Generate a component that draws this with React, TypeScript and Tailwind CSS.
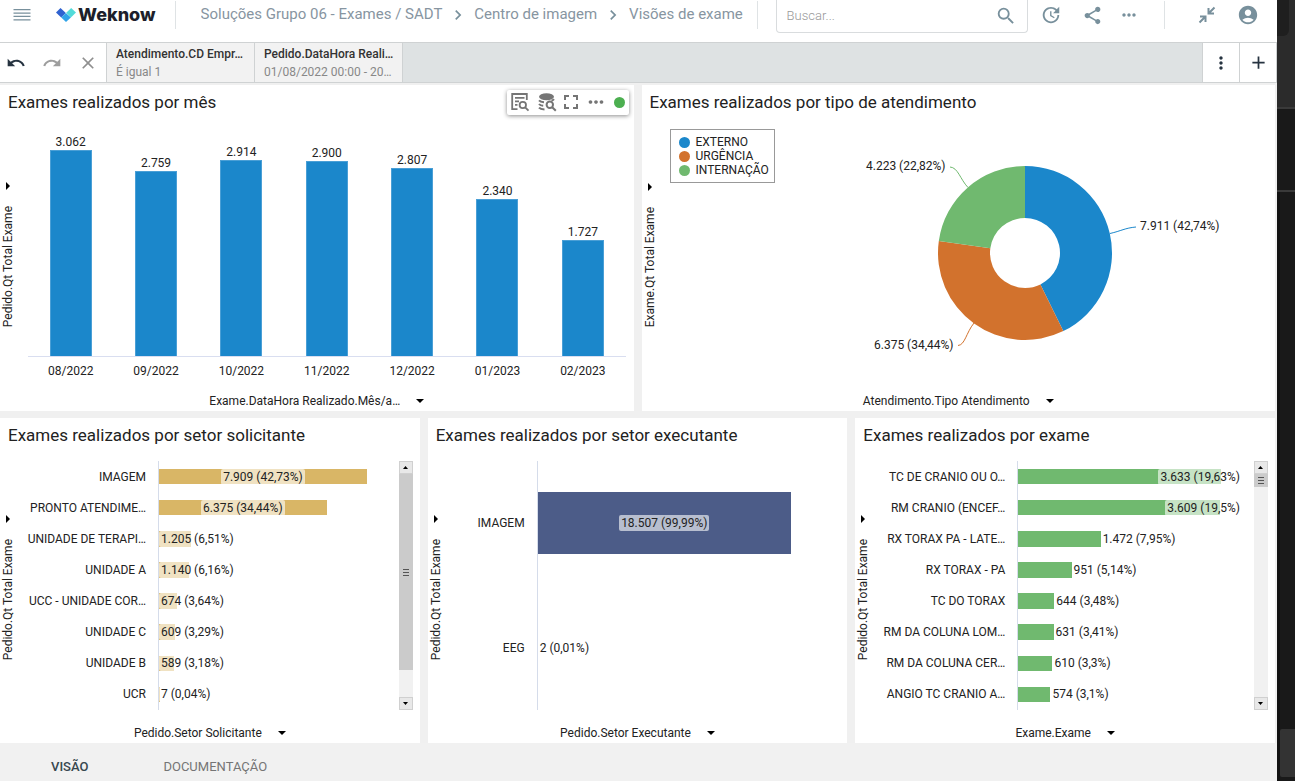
import type { ReactNode } from "react";
import clsx from "clsx";
import {
  MdAccountCircle,
  MdAdd,
  MdChevronRight,
  MdClose,
  MdMoreHoriz,
  MdMoreVert,
  MdRedo,
  MdSearch,
  MdShare,
  MdUndo,
  MdUpdate,
} from "react-icons/md";

type Bar = { label: string; value: number; text: string };

const MONTHS: Bar[] = [
  { label: "08/2022", value: 3062, text: "3.062" },
  { label: "09/2022", value: 2759, text: "2.759" },
  { label: "10/2022", value: 2914, text: "2.914" },
  { label: "11/2022", value: 2900, text: "2.900" },
  { label: "12/2022", value: 2807, text: "2.807" },
  { label: "01/2023", value: 2340, text: "2.340" },
  { label: "02/2023", value: 1727, text: "1.727" },
];

const REQUESTERS: Bar[] = [
  { label: "IMAGEM", value: 7909, text: "7.909 (42,73%)" },
  { label: "PRONTO ATENDIME…", value: 6375, text: "6.375 (34,44%)" },
  { label: "UNIDADE DE TERAPI…", value: 1205, text: "1.205 (6,51%)" },
  { label: "UNIDADE A", value: 1140, text: "1.140 (6,16%)" },
  { label: "UCC - UNIDADE COR…", value: 674, text: "674 (3,64%)" },
  { label: "UNIDADE C", value: 609, text: "609 (3,29%)" },
  { label: "UNIDADE B", value: 589, text: "589 (3,18%)" },
  { label: "UCR", value: 7, text: "7 (0,04%)" },
];

const EXECUTORS: Bar[] = [
  { label: "IMAGEM", value: 18507, text: "18.507 (99,99%)" },
  { label: "EEG", value: 2, text: "2 (0,01%)" },
];

const EXAMS: Bar[] = [
  { label: "TC DE CRANIO OU O…", value: 3633, text: "3.633 (19,63%)" },
  { label: "RM CRANIO (ENCEF…", value: 3609, text: "3.609 (19,5%)" },
  { label: "RX TORAX PA - LATE…", value: 1472, text: "1.472 (7,95%)" },
  { label: "RX TORAX - PA", value: 951, text: "951 (5,14%)" },
  { label: "TC DO TORAX", value: 644, text: "644 (3,48%)" },
  { label: "RM DA COLUNA LOM…", value: 631, text: "631 (3,41%)" },
  { label: "RM DA COLUNA CER…", value: 610, text: "610 (3,3%)" },
  { label: "ANGIO TC CRANIO A…", value: 574, text: "574 (3,1%)" },
];

const KINDS = [
  { label: "EXTERNO", value: 7911, color: "#1b87cb" },
  { label: "URGÊNCIA", value: 6375, color: "#d2722d" },
  { label: "INTERNAÇÃO", value: 4223, color: "#70b96f" },
];

function Logo() {
  return (
    <a href="#" className="flex items-center gap-0.5 text-[#1d1f2b]">
      <svg width="20" height="14" viewBox="0 0 20 14" aria-hidden="true">
        <path d="M0 4.5 4.5 0 9.8 5 5.2 9.5z" fill="#2f62d0" />
        <path d="M10.2 4.8 15.2 0 20 4.5 14.9 9.5z" fill="#52dbd9" />
        <path d="M5.2 9.5 9.9 4.9 14.9 9.5 10 14z" fill="#2fa3e8" />
      </svg>
      <span className="font-[Inter,sans-serif] text-lg leading-6 font-extrabold">Weknow</span>
    </a>
  );
}

function CollapseIcon() {
  return (
    <svg width="18" height="18" viewBox="0 0 18 18" fill="none" stroke="currentColor" strokeWidth="2" aria-hidden="true">
      <path d="M16.5 1.5 11 7M10.5 2v5.500h5.500M1.5 16.5 7 11M2 10.5h5.500v5.500" />
    </svg>
  );
}

function TableSearchIcon() {
  return (
    <svg width="20" height="20" viewBox="0 0 20 20" fill="none" stroke="currentColor" strokeWidth="1.8" aria-hidden="true">
      <path d="M7.5 17.2H2.2V2h14.6v6M5 5.8h9.5M5 9.3h4M5 12.8h2.5" />
      <circle cx="12.8" cy="13" r="3.2" />
      <path d="m15.2 15.4 3.3 3.3" />
    </svg>
  );
}

function DataSearchIcon() {
  return (
    <svg width="20" height="20" viewBox="0 0 20 20" fill="none" stroke="currentColor" strokeWidth="2" aria-hidden="true">
      <ellipse cx="9.5" cy="4.7" rx="7.5" ry="3.5" fill="currentColor" stroke="none" />
      <path d="M2 8.3c1 1.2 2.8 1.8 5 2M2 12c.8 1 2.2 1.6 4.2 1.8M2 15.6c1 1.2 3 1.8 5.5 1.9M17 7.2c-.6.8-1.5 1.200-2.500 1.500" />
      <circle cx="12.8" cy="12.8" r="3.2" />
      <path d="m15.2 15.2 3.6 3.6" />
    </svg>
  );
}

function FullscreenIcon() {
  return (
    <svg width="14" height="14" viewBox="0 0 14 14" fill="none" stroke="currentColor" strokeWidth="2" aria-hidden="true">
      <path d="M1 5V1h4M9 1h4v4M13 9v4H9M5 13H1V9" />
    </svg>
  );
}

function Divider() {
  return <div className="h-7 w-px shrink-0 bg-[#dfe3e5]" />;
}

function Header() {
  return (
    <header className="flex h-[42px] items-center bg-white pb-3 text-[#78909c]">
      <button aria-label="Menu" className="ml-[13px] shrink-0">
        <svg width="18" height="12" viewBox="0 0 18 12" fill="currentColor" aria-hidden="true">
          <path d="M.5 0h17v1.300H.5zM.5 3.400h17v1.300H.5zM.5 6.800h17v1.300H.5zM.5 10.200h17v1.300H.5z" />
        </svg>
      </button>
      <div className="mr-[19px] ml-[25px] shrink-0">
        <Logo />
      </div>
      <Divider />
      <nav className="ml-[25px] flex w-[544px] items-center overflow-hidden text-[15px] whitespace-nowrap text-[#8795a1]">
        <a href="#">Soluções Grupo 06 - Exames / SADT</a>
        <MdChevronRight className="mx-1.5 shrink-0 text-[#78909c]" size={20} />
        <a href="#">Centro de imagem</a>
        <MdChevronRight className="mx-1.5 shrink-0 text-[#78909c]" size={20} />
        <a href="#">Visões de exame</a>
      </nav>
      <div className="mr-[18px] ml-3">
        <Divider />
      </div>
      <label className="flex h-[33px] min-w-32 flex-1 items-center self-start rounded-b border border-t-0 border-[#d9dcde] pr-2.5 pl-2.5">
        <input
          type="text"
          aria-label="Buscar"
          placeholder="Buscar..."
          className="min-w-0 flex-1 text-[13px] font-light outline-none placeholder:text-[#999]"
        />
        <MdSearch size={22} />
      </label>
      <div className="flex shrink-0 items-center">
        <button aria-label="Atualizar" className="ml-3">
          <MdUpdate size={22} />
        </button>
        <button aria-label="Compartilhar" className="ml-5">
          <MdShare size={21} />
        </button>
        <button aria-label="Mais opções" className="mr-[25px] ml-4">
          <MdMoreHoriz size={20} />
        </button>
        <Divider />
        <button aria-label="Recolher" className="ml-[33px]">
          <CollapseIcon />
        </button>
        <button aria-label="Conta" className="mr-[18px] ml-[21px]">
          <MdAccountCircle size={22} />
        </button>
      </div>
    </header>
  );
}

function Filter({ name, value }: { name: string; value: string }) {
  return (
    <button className="w-[148px] border-l border-[#cfd2d3] bg-[#f2f2f2] pl-[9px] text-left text-xs leading-[18px] whitespace-nowrap">
      <div className="font-medium text-[#333]">{name}</div>
      <div className="text-[#888]">{value}</div>
    </button>
  );
}

function FilterBar() {
  return (
    <div className="flex h-[41px] border-y border-[#cfd2d3] bg-[#dee2e3] text-[#263340]">
      <div className="flex w-[106px] items-center justify-between bg-white px-1.5">
        <button aria-label="Desfazer">
          <MdUndo size={20} />
        </button>
        <button aria-label="Refazer" className="text-[#9e9e9e]">
          <MdRedo size={20} />
        </button>
        <button aria-label="Limpar" className="mr-0.5 text-[#8f8f8f]">
          <MdClose size={20} />
        </button>
      </div>
      <Filter name="Atendimento.CD Empr…" value="É igual 1" />
      <Filter name="Pedido.DataHora Reali…" value="01/08/2022 00:00 - 20…" />
      <div className="flex-1 border-l border-[#cfd2d3]" />
      <button aria-label="Opções do filtro" className="flex w-[37px] items-center justify-center border-l border-[#cfd2d3] bg-white">
        <MdMoreVert size={20} />
      </button>
      <button aria-label="Adicionar filtro" className="flex w-[38px] items-center justify-center border-x border-[#cfd2d3] bg-white">
        <MdAdd size={21} />
      </button>
    </div>
  );
}

function CardTools() {
  return (
    <div className="mr-[5px] flex h-[25px] items-center gap-[7px] rounded-xs bg-white pr-1 pl-[3px] text-[#757575] shadow-[0_1px_4px_rgba(0,0,0,0.45)]">
      <button aria-label="Detalhar">
        <TableSearchIcon />
      </button>
      <button aria-label="Dados">
        <DataSearchIcon />
      </button>
      <button aria-label="Tela cheia">
        <FullscreenIcon />
      </button>
      <button aria-label="Mais">
        <MdMoreHoriz size={22} />
      </button>
      <span className="size-[11px] rounded-full bg-[#4caf50]" />
    </div>
  );
}

function Card(props: { title: string; yLabel: string; xLabel: string; tools?: ReactNode; children: ReactNode }) {
  return (
    <section className="flex min-w-0 flex-col bg-white">
      <div className="flex h-9 items-center justify-between pb-0.5 pl-2">
        <h2 className="text-[17px] leading-6">{props.title}</h2>
        {props.tools}
      </div>
      <div className="flex flex-1">
        <button className="mr-3 flex w-4 flex-col items-center justify-center gap-4">
          <svg width="4" height="8" viewBox="0 0 4 8" aria-hidden="true">
            <path d="M0 0 4 4 0 8z" />
          </svg>
          <span className="rotate-180 leading-4 [writing-mode:vertical-rl]">{props.yLabel}</span>
        </button>
        {props.children}
      </div>
      <button className="flex h-[22px] items-center justify-center gap-4 pt-0.5">
        {props.xLabel}
        <svg width="8" height="4" viewBox="0 0 8 4" aria-hidden="true">
          <path d="M0 0h8L4 4z" />
        </svg>
      </button>
    </section>
  );
}

function ColumnChart({ data, max }: { data: Bar[]; max: number }) {
  return (
    <div className="flex flex-1 flex-col pr-2">
      <div className="flex flex-1 border-b border-[#d9def0]">
        {data.map((d) => (
          <div key={d.label} className="flex flex-1 flex-col items-center justify-end">
            <span className="leading-4">{d.text}</span>
            <div
              className="w-[42px] shrink-0 border border-b-0 border-[#4a9fd6] bg-[#1b87cb]"
              style={{ height: `${(d.value / max) * 100}%` }}
            />
          </div>
        ))}
      </div>
      <div className="flex h-8 pb-1">
        {data.map((d) => (
          <span key={d.label} className="flex-1 text-center leading-7">
            {d.label}
          </span>
        ))}
      </div>
    </div>
  );
}

function Scrollbar({ thumb }: { thumb: string }) {
  return (
    <div className="mr-[7px] flex w-3.5 shrink-0 flex-col bg-[#f1f1f1]">
      <div className="flex h-[13px] items-center justify-center border border-[#d0d0d0] bg-[#e8e8e8]">
        <svg width="5" height="3" viewBox="0 0 5 3" aria-hidden="true">
          <path d="M0 3h5L2.500 0z" />
        </svg>
      </div>
      <div className="flex-1">
        <div className="flex flex-col items-center justify-center gap-px bg-[#cbcbcb]" style={{ height: thumb }}>
          <div className="h-px w-1.5 bg-[#555]" />
          <div className="my-px h-px w-1.5 bg-[#555]" />
          <div className="h-px w-1.5 bg-[#555]" />
        </div>
      </div>
      <div className="flex h-[13px] items-center justify-center border border-[#d0d0d0] bg-[#e8e8e8]">
        <svg width="5" height="3" viewBox="0 0 5 3" aria-hidden="true">
          <path d="M0 0h5L2.500 3z" />
        </svg>
      </div>
    </div>
  );
}

type Place = "center" | "start" | "end" | "after";

function RowChart(props: {
  data: Bar[];
  max: number;
  labelClass: string;
  plotClass: string;
  barClass: string;
  place: (d: Bar) => Place;
  children?: ReactNode;
}) {
  return (
    <div className="flex min-w-0 flex-1 pt-[7px] pb-[11px]">
      <div className={clsx("flex shrink-0 flex-col text-right whitespace-nowrap", props.labelClass)}>
        {props.data.map((d) => (
          <span key={d.label} className="flex flex-1 items-center justify-end">
            {d.label}
          </span>
        ))}
      </div>
      <div className={clsx("ml-3 flex flex-1 flex-col border-l border-[#d5dcea]", props.plotClass)}>
        {props.data.map((d) => {
          const place = props.place(d);
          const width = `${(d.value / props.max) * 100}%`;
          const text = (
            <span className={clsx("px-0.5 leading-4 whitespace-nowrap", place !== "after" && "rounded-xs bg-white/60")}>
              {d.text}
            </span>
          );
          return (
            <div key={d.label} className="relative flex flex-1 items-center">
              <div className={clsx("flex h-1/2 shrink-0 items-center justify-center", props.barClass)} style={{ width }}>
                {place === "center" && text}
              </div>
              {place === "after" && text}
              {(place === "start" || place === "end") && (
                <div className={clsx("absolute inset-0 flex items-center", place === "end" && "justify-end")}>{text}</div>
              )}
            </div>
          );
        })}
      </div>
      {props.children}
    </div>
  );
}

function arc(from: number, to: number) {
  const [cx, cy, R, r] = [200, 132, 87, 35];
  const point = (t: number, radius: number) => {
    const a = t * 2 * Math.PI;
    return `${cx + radius * Math.sin(a)} ${cy - radius * Math.cos(a)}`;
  };
  const large = to - from > 0.5 ? 1 : 0;
  return `M${point(from, R)}A${R} ${R} 0 ${large} 1 ${point(to, R)}L${point(to, r)}A${r} ${r} 0 ${large} 0 ${point(from, r)}z`;
}

function DonutChart() {
  const total = KINDS.reduce((sum, k) => sum + k.value, 0);
  let start = 0;
  return (
    <div className="flex flex-1 items-start">
      <ul className="mt-2 border border-[#999] py-[5px] pr-[5px] pl-2">
        {KINDS.map((k) => (
          <li key={k.label} className="flex items-center gap-1.5 leading-[14px]">
            <span className="size-[11px] rounded-full" style={{ background: k.color }} />
            {k.label}
          </li>
        ))}
      </ul>
      <div className="flex flex-1 justify-center">
        <svg width="400" height="240" viewBox="0 0 400 240" className="text-xs" fill="#222">
          {KINDS.map((k) => {
            const from = start;
            start += k.value / total;
            return <path key={k.label} d={arc(from, start)} fill={k.color} />;
          })}
          <g fill="none">
            <path d="M285 112.500C296 110 300 107 311 106" stroke="#1b87cb" />
            <path d="M143 66.500C135 58 133 46.500 125 46" stroke="#70b96f" />
            <path d="M149 202C141 212 140 224 133 224.500" stroke="#d2722d" />
          </g>
          <text x="315" y="109">7.911 (42,74%)</text>
          <text x="41" y="49">4.223 (22,82%)</text>
          <text x="49" y="228">6.375 (34,44%)</text>
        </svg>
      </div>
    </div>
  );
}

// slice of the dark editor window behind the dashboard
function SideStrip() {
  return (
    <aside className="flex w-[18px] shrink-0 flex-col bg-[#191919]">
      <div className="h-[109px] border-b-2 border-[#3a3a3a] bg-[#2b2b2b]">
        <div className="h-9 w-3 rounded-br-md bg-[#1f1f1f]" />
      </div>
      <div className="h-[83px] border-b-2 border-[#3a3a3a]" />
      <div className="flex flex-1 flex-col justify-end border-l-[3px] border-[#121212] pb-1">
        <div className="h-12 rounded-l-xs bg-[#333]" />
      </div>
    </aside>
  );
}

export default function App() {
  return (
    <div className="flex min-h-screen bg-[#f0f0f0] font-[Roboto,sans-serif] text-xs text-[#222]">
      <div className="flex min-w-0 flex-1 flex-col">
        <Header />
        <FilterBar />
        <main className="flex flex-1 flex-col gap-[7px] pt-0.5 pr-0.5">
          <div className="grid min-h-[326px] flex-1 grid-cols-2 gap-2">
            <Card
              title="Exames realizados por mês"
              yLabel="Pedido.Qt Total Exame"
              xLabel="Exame.DataHora Realizado.Mês/a…"
              tools={<CardTools />}
            >
              <ColumnChart data={MONTHS} max={3500} />
            </Card>
            <Card
              title="Exames realizados por tipo de atendimento"
              yLabel="Exame.Qt Total Exame"
              xLabel="Atendimento.Tipo Atendimento"
            >
              <DonutChart />
            </Card>
          </div>
          <div className="grid min-h-[325px] flex-1 grid-cols-3 gap-2">
            <Card
              title="Exames realizados por setor solicitante"
              yLabel="Pedido.Qt Total Exame"
              xLabel="Pedido.Setor Solicitante"
            >
              <RowChart
                data={REQUESTERS}
                max={9000}
                labelClass="w-[118px]"
                plotClass="mr-[3px]"
                barClass="bg-[#d9b666]"
                place={(d) => (d.value > 5000 ? "center" : "start")}
              >
                <Scrollbar thumb="88%" />
              </RowChart>
            </Card>
            <Card
              title="Exames realizados por setor executante"
              yLabel="Pedido.Qt Total Exame"
              xLabel="Pedido.Setor Executante"
            >
              <RowChart
                data={EXECUTORS}
                max={20000}
                labelClass="w-[69px]"
                plotClass="mr-9"
                barClass="bg-[#4c5c88]"
                place={(d) => (d.value > 5000 ? "center" : "after")}
              />
            </Card>
            <Card title="Exames realizados por exame" yLabel="Pedido.Qt Total Exame" xLabel="Exame.Exame">
              <RowChart
                data={EXAMS}
                max={4000}
                labelClass="w-[122px]"
                plotClass="mr-3"
                barClass="bg-[#70b96f]"
                place={(d) => (d.value > 3000 ? "end" : "after")}
              >
                <Scrollbar thumb="13px" />
              </RowChart>
            </Card>
          </div>
        </main>
        <footer className="flex h-[38px] items-center gap-[75px] bg-[#f1f1f1] pt-2.5 pl-[51px] text-[13px]">
          <button className="font-medium text-[#37474f]">VISÃO</button>
          <button className="text-[#757575]">DOCUMENTAÇÃO</button>
        </footer>
      </div>
      <SideStrip />
    </div>
  );
}
